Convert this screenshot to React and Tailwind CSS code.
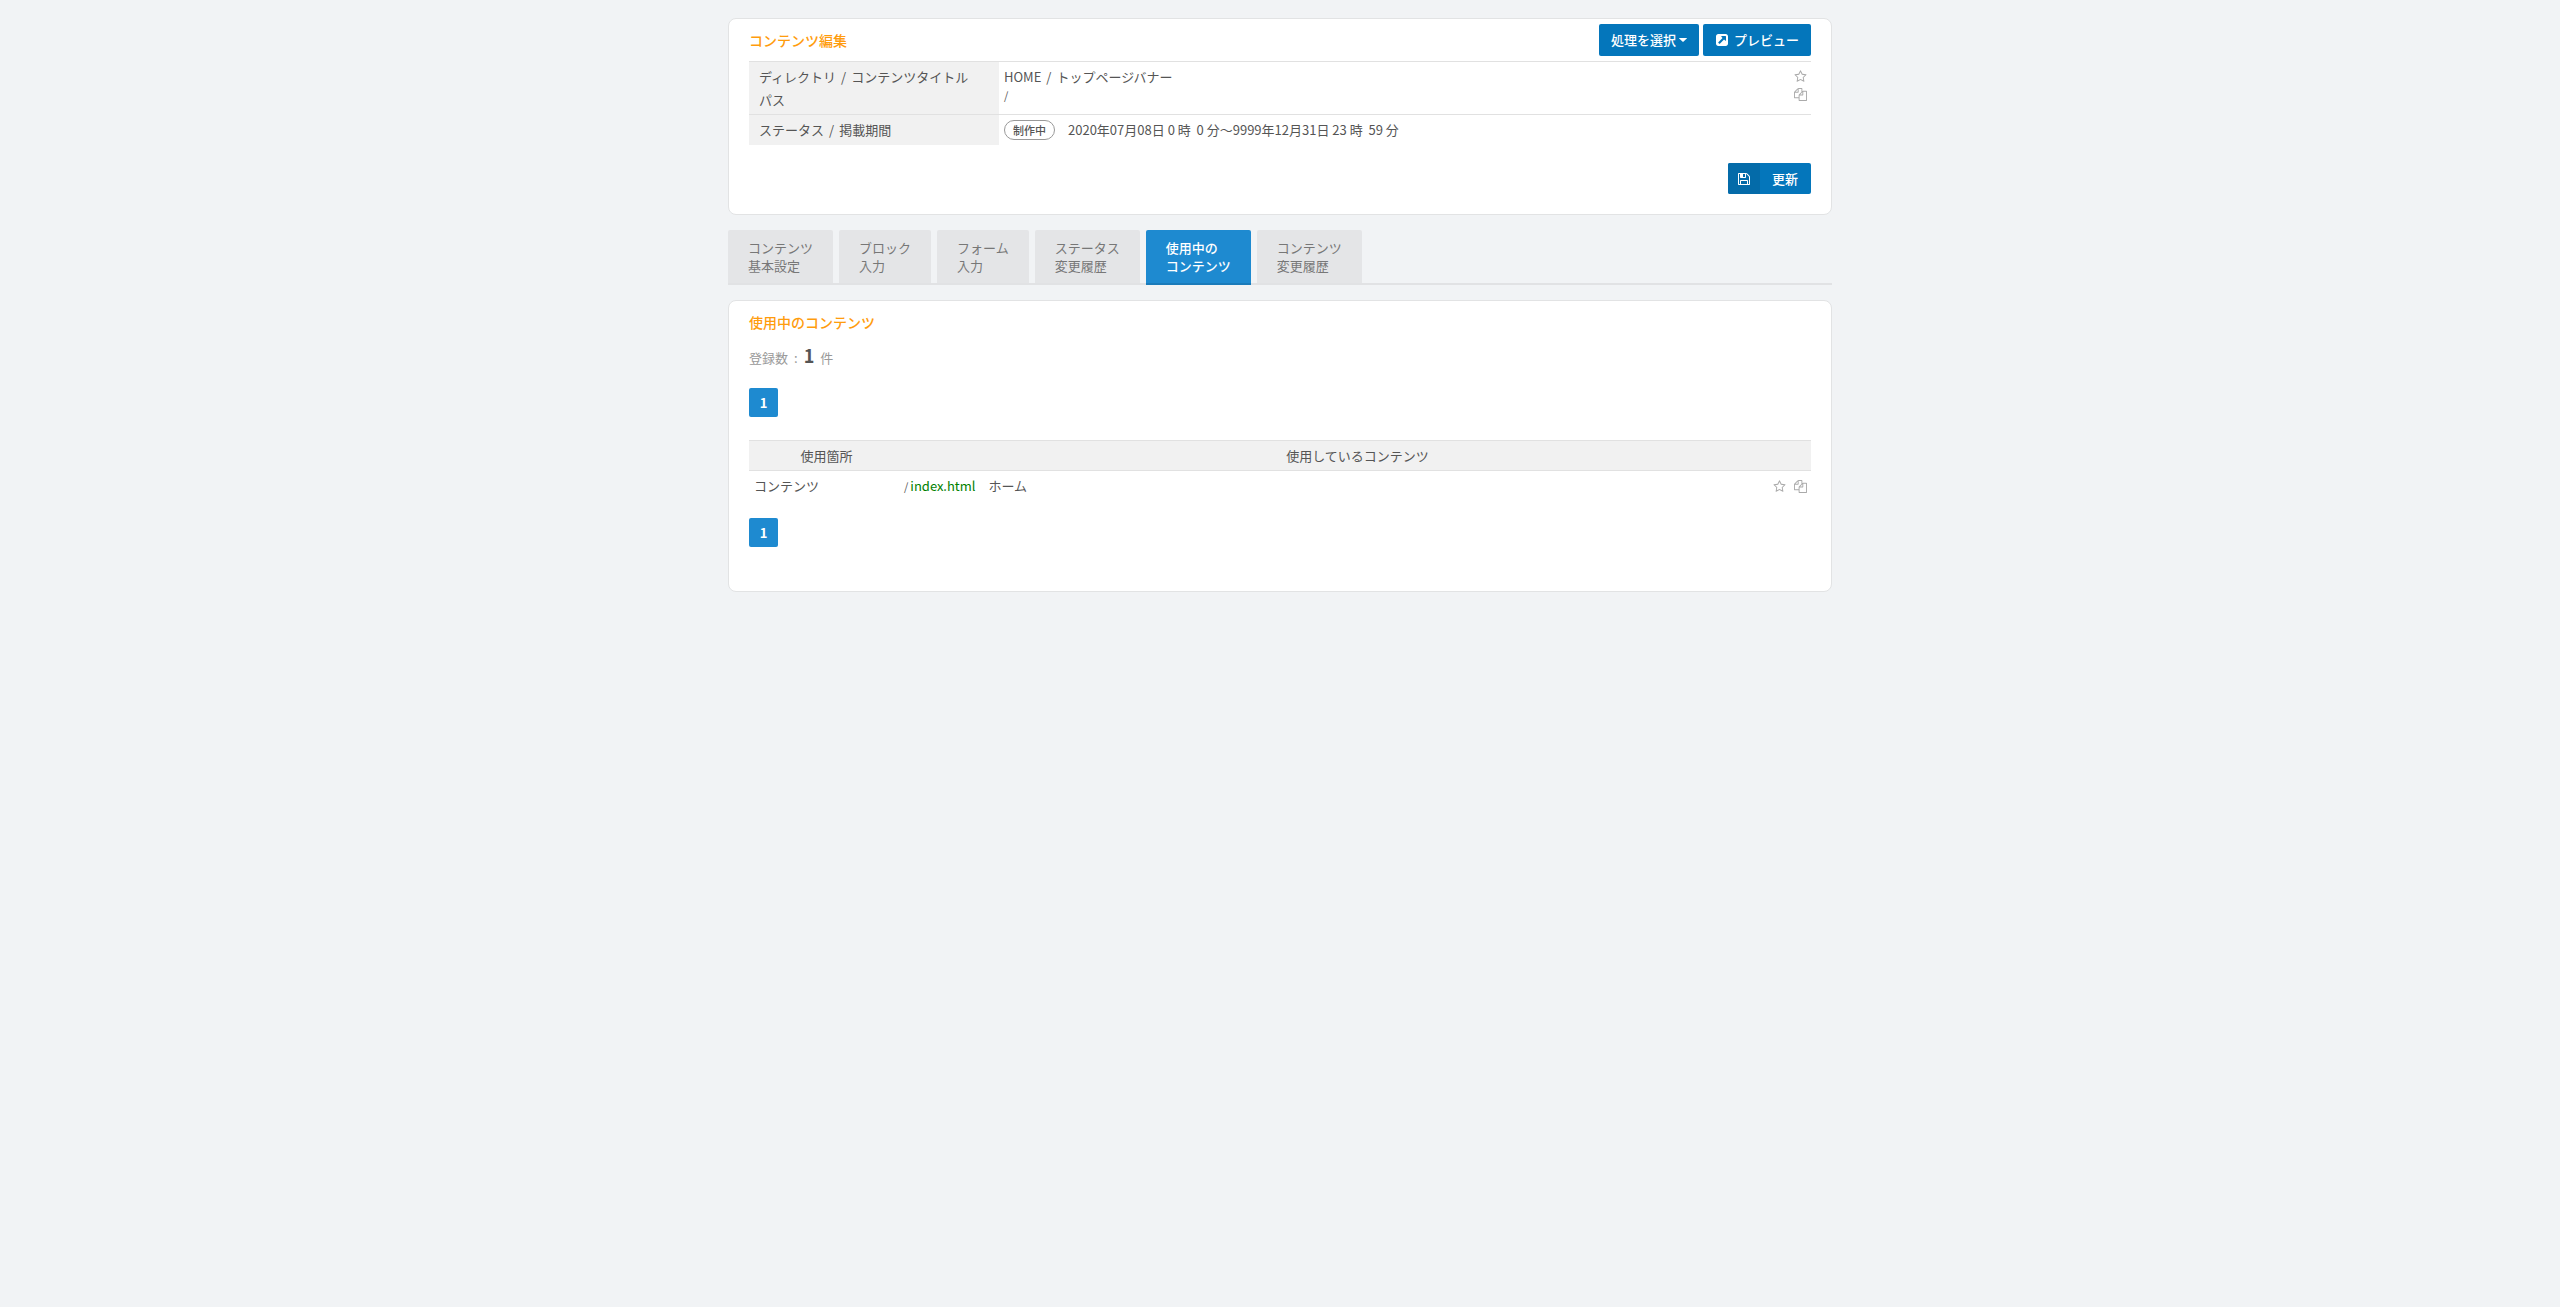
import { useState } from "react";

const ICONS = {
  star: "M1201 1004l306-297-422-62-189-382-189 382-422 62 306 297-73 421 378-199 377 199zm527-357q0 22-26 48l-363 354 86 500q1 7 1 20 0 50-41 50-19 0-40-12l-449-236-449 236q-22 12-40 12-21 0-31.500-14.500t-10.500-35.500q0-6 2-20l86-500-364-354q-25-27-25-48 0-37 56-46l502-73 225-455q19-41 49-41t49 41l225 455 502 73q56 9 56 46z",
  copy: "M1696 384q40 0 68 28t28 68v1216q0 40-28 68t-68 28h-960q-40 0-68-28t-28-68v-288h-544q-40 0-68-28t-28-68v-672q0-40 20-88t48-76l408-408q28-28 76-48t88-20h416q40 0 68 28t28 68v328q68-40 128-40h416zm-544 213l-299 299h299v-299zm-640-384l-299 299h299v-299zm196 647l316-316v-416h-384v416q0 40-28 68t-68 28h-416v640h512v-256q0-40 20-88t48-76zm956 804v-1152h-384v416q0 40-28 68t-68 28h-416v640h896z",
  save: "M512 1536h768v-384h-768v384zm896 0h128v-896q0-14-10-38.500t-20-34.500l-281-281q-10-10-34-20t-39-10v416q0 40-28 68t-68 28h-576q-40 0-68-28t-28-68v-416h-128v1280h128v-416q0-40 28-68t68-28h832q40 0 68 28t28 68v416zm-384-928v-320q0-13-9.500-22.500t-22.500-9.500h-192q-13 0-22.500 9.500t-9.500 22.500v320q0 13 9.500 22.500t22.500 9.500h192q13 0 22.500-9.500t9.500-22.500zm640 32v928q0 40-28 68t-68 28h-1344q-40 0-68-28t-28-68v-1344q0-40 28-68t68-28h928q40 0 88 20t76 48l280 280q28 28 48 76t20 88z",
  external: "M1408 928v-480q0-26-19-45t-45-19h-480q-42 0-59 39-17 41 14 70l144 144-534 534q-19 19-19 45t19 45l102 102q19 19 45 19t45-19l534-534 144 144q18 19 45 19 12 0 25-5 39-17 39-59zm256-512v960q0 119-84.500 203.500t-203.500 84.500h-960q-119 0-203.500-84.500t-84.500-203.500v-960q0-119 84.500-203.500t203.500-84.500h960q119 0 203.500 84.500t84.500 203.500z"
};

const TABS = [
  ["コンテンツ", "基本設定"],
  ["ブロック", "入力"],
  ["フォーム", "入力"],
  ["ステータス", "変更履歴"],
  ["使用中の", "コンテンツ"],
  ["コンテンツ", "変更履歴"]
];

function Icon({ name, className }) {
  return (
    <svg viewBox="0 0 1792 1792" fill="currentColor" aria-hidden="true" className={className}>
      <path d={ICONS[name]} />
    </svg>
  );
}

function IconButton({ name, label }) {
  return (
    <button type="button" aria-label={label} className="block text-[#aaa]">
      <Icon name={name} className="size-[13px]" />
    </button>
  );
}

function Slash() {
  return <span className="mx-[5px]">/</span>;
}

function Card({ children }) {
  return <section className="rounded-lg border border-[#e2e3e4] bg-white px-5">{children}</section>;
}

function Pager() {
  return (
    <nav className="flex">
      <a
        href="#page-1"
        aria-current="page"
        className="flex size-[29px] items-center justify-center rounded-[2px] bg-[#1e8ad0] font-bold text-white"
      >
        1
      </a>
    </nav>
  );
}

function Tabs() {
  const [active, setActive] = useState(4);

  return (
    <div role="tablist" className="mt-[15px] flex gap-1.5 shadow-[inset_0_-2px_0_#e1e2e4]">
      {TABS.map(([first, second], index) => (
        <button
          key={index}
          type="button"
          role="tab"
          aria-selected={index === active}
          onClick={() => setActive(index)}
          className={
            index === active
              ? "rounded-t-[2px] border-b-2 border-[#1a7bba] bg-[#1e8ad0] px-5 pt-[9px] pb-2 text-left leading-[18px] font-medium text-white"
              : "rounded-t-[2px] border-b-2 border-[#e1e2e4] bg-[#e4e5e7] px-5 pt-[9px] pb-2 text-left leading-[18px] text-[#777]"
          }
        >
          {first}
          <br />
          {second}
        </button>
      ))}
    </div>
  );
}

export default function App() {
  return (
    <main
      lang="ja"
      className="min-h-screen bg-[#f1f3f5] px-4 pt-[18px] pb-10 font-['Noto_Sans_CJK_JP',sans-serif] text-[13px] leading-[18px] text-[#555]"
    >
      <div className="mx-auto max-w-[1104px]">
        <Card>
          <header className="flex h-[42px] items-center justify-between">
            <h1 className="text-sm font-medium text-[#ff9c0d]">コンテンツ編集</h1>
            <div className="flex gap-1">
              <button type="button" className="flex h-8 items-center gap-[3px] rounded-[2px] bg-[#0476bb] px-3 font-medium text-white">
                処理を選択
                <svg viewBox="0 0 8 4" fill="currentColor" aria-hidden="true" className="h-1 w-2">
                  <path d="M.3 0h7.400q.5 0 .1.400L4.300 3.800q-.3.300-.6 0L.2.400Q-.2 0 .3 0z" />
                </svg>
              </button>
              <button type="button" className="flex h-8 items-center gap-[5px] rounded-[2px] bg-[#0476bb] px-3 font-medium text-white">
                <Icon name="external" className="size-[14px]" />
                プレビュー
              </button>
            </div>
          </header>

          <table className="w-full border-collapse text-left">
            <tbody>
              <tr className="border-t border-[#e1e1e1]">
                <th scope="row" className="w-[250px] bg-[#f1f1f1] px-2.5 py-[3px] align-top leading-[23px] font-normal">
                  ディレクトリ<Slash />コンテンツタイトル
                  <br />
                  パス
                </th>
                <td className="py-1.5 pr-1 pl-[5px] align-top">
                  <div className="flex items-start justify-between">
                    <div>
                      <p>HOME<Slash />トップページバナー</p>
                      <p className="text-[11px] leading-[18px]">/</p>
                    </div>
                    <div className="flex flex-col gap-[5px] pt-0.5">
                      <IconButton name="star" label="お気に入り" />
                      <IconButton name="copy" label="コピー" />
                    </div>
                  </div>
                </td>
              </tr>
              <tr className="border-t border-[#e1e1e1]">
                <th scope="row" className="bg-[#f1f1f1] px-2.5 font-normal">
                  ステータス<Slash />掲載期間
                </th>
                <td className="px-[5px] py-[5px]">
                  <div className="flex items-center gap-[13px]">
                    <span className="flex h-5 items-center rounded-full border border-[#999] px-2 text-[11px] font-medium">制作中</span>
                    <span>2020年07月08日 0 時&nbsp; 0 分～9999年12月31日 23 時&nbsp; 59 分</span>
                  </div>
                </td>
              </tr>
            </tbody>
          </table>

          <div className="flex justify-end pt-[18px] pb-5">
            <button type="button" className="flex h-[31px] items-center rounded-[2px] bg-[#0476bb] font-medium text-white">
              <span className="flex h-full w-8 items-center justify-center rounded-l-[2px] bg-[#046ba9]">
                <Icon name="save" className="size-[14px]" />
              </span>
              <span className="pr-[13px] pl-3">更新</span>
            </button>
          </div>
        </Card>

        <Tabs />

        <div className="mt-[15px]">
          <Card>
            <h2 className="pt-[11px] text-sm leading-5 font-medium text-[#ff9c0d]">使用中のコンテンツ</h2>
            <p className="mt-[11px] leading-6 text-[#999]">
              登録数<span className="mx-[6px]">:</span>
              <strong className="mr-[6px] text-lg leading-6 font-bold text-[#555]">1</strong>件
            </p>
            <div className="mt-[18px]">
              <Pager />
            </div>
            <table className="mt-[23px] w-full border-collapse">
              <thead>
                <tr className="border-y border-[#e1e1e1] bg-[#f1f1f1]">
                  <th scope="col" className="w-[155px] pt-1.5 pb-[5px] font-normal">使用箇所</th>
                  <th scope="col" className="pt-1.5 pb-[5px] font-normal">使用しているコンテンツ</th>
                </tr>
              </thead>
              <tbody>
                <tr>
                  <td className="px-[5px] py-1.5">コンテンツ</td>
                  <td className="py-1.5 pr-1">
                    <div className="flex items-center justify-between">
                      <p>
                        <span className="mr-0.5 text-[11px] leading-[18px]">/</span>
                        <a href="#index" className="text-[#008000]">index.html</a>　ホーム
                      </p>
                      <div className="flex gap-2">
                        <IconButton name="star" label="お気に入り" />
                        <IconButton name="copy" label="コピー" />
                      </div>
                    </div>
                  </td>
                </tr>
              </tbody>
            </table>
            <div className="pt-[17px] pb-11">
              <Pager />
            </div>
          </Card>
        </div>
      </div>
    </main>
  );
}
